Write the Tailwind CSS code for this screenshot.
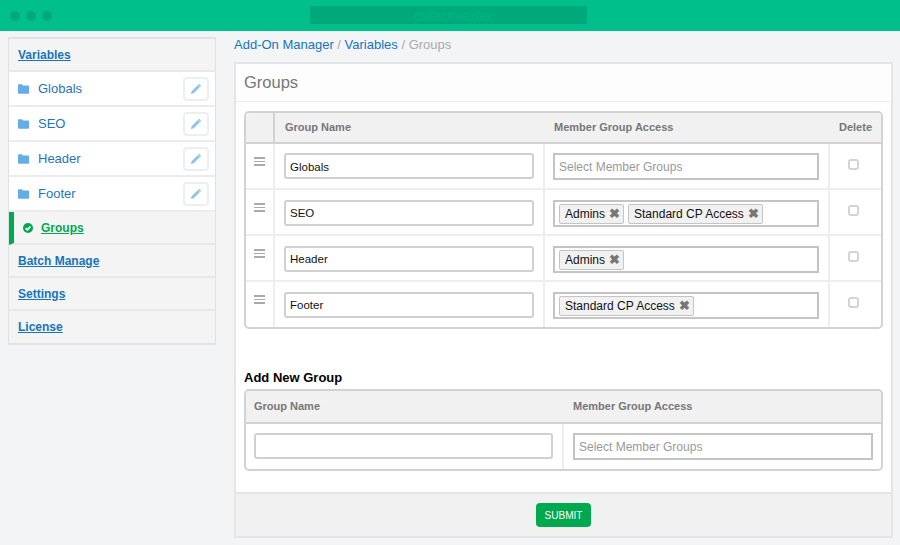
<!DOCTYPE html>
<html lang="en">
<head>
  <meta charset="UTF-8">
  <title>Groups</title>
  <script src="https://cdn.jsdelivr.net/npm/@tailwindcss/browser@4"></script>
</head>
<body class="w-[900px] h-[545px] overflow-hidden bg-[#f3f4f6] font-['Liberation_Sans',Arial,sans-serif] text-[13px] text-[#111]">
  <!-- browser bar -->
  <div class="relative h-[31px] bg-[#00bf8a] flex items-center pl-[10px] gap-[6px]">
    <span class="w-[10px] h-[10px] rounded-full bg-[#00a97c]"></span>
    <span class="w-[10px] h-[10px] rounded-full bg-[#00a97c]"></span>
    <span class="w-[10px] h-[10px] rounded-full bg-[#00a97c]"></span>
    <div class="absolute left-[310px] top-[6px] w-[277px] h-[18px] pl-[9px] rounded-[2px] bg-[#00a97a] text-center text-[13px] leading-[18px] text-[#00b583] font-['Lato',sans-serif]">collective.dev</div>
  </div>

  <div class="flex items-start pl-[8px] pt-[6px] gap-[18px]">
    <!-- sidebar -->
    <aside class="w-[208px] border-x border-t-2 border-b-2 border-[#dfe1e2] text-[14px] bg-white">
      <a class="flex items-center h-[33px] pl-[9px] border-b-2 border-[#e8e8e8] bg-[#f4f4f4] font-bold text-[12px] text-[#1674bc] underline">Variables</a>

      <div class="flex items-center h-[35px] pl-[9px] pr-[6px] border-b-2 border-[#ececec] text-[13px] text-[#1f75ba]">
        <svg class="w-[11px] h-[10px] mr-[9px]" viewBox="0 0 11 10"><path fill="#64ade6" d="M0 1.2C0 .6.4.2 1 .2h3l1 1.3h5c.6 0 1 .4 1 1v6.3c0 .6-.4 1-1 1H1c-.6 0-1-.4-1-1z"/></svg>
        <span>Globals</span>
        <span class="ml-auto w-[26px] h-[24px] flex items-center justify-center rounded-[4px] border-2 border-[#eceff1] bg-white">
          <svg class="w-[10px] h-[10px]" viewBox="0 0 11 11"><path fill="#8fc1ea" d="M0 11l.7-3L7.6 1.1l2.3 2.3L3 10.3zM8.3.4c.4-.4 1-.4 1.4 0l.9.9c.4.4.4 1 0 1.4l-.3.3L8 .7z"/></svg>
        </span>
      </div>
      <div class="flex items-center h-[35px] pl-[9px] pr-[6px] border-b-2 border-[#ececec] text-[13px] text-[#1f75ba]">
        <svg class="w-[11px] h-[10px] mr-[9px]" viewBox="0 0 11 10"><path fill="#64ade6" d="M0 1.2C0 .6.4.2 1 .2h3l1 1.3h5c.6 0 1 .4 1 1v6.3c0 .6-.4 1-1 1H1c-.6 0-1-.4-1-1z"/></svg>
        <span>SEO</span>
        <span class="ml-auto w-[26px] h-[24px] flex items-center justify-center rounded-[4px] border-2 border-[#eceff1] bg-white">
          <svg class="w-[10px] h-[10px]" viewBox="0 0 11 11"><path fill="#8fc1ea" d="M0 11l.7-3L7.6 1.1l2.3 2.3L3 10.3zM8.3.4c.4-.4 1-.4 1.4 0l.9.9c.4.4.4 1 0 1.4l-.3.3L8 .7z"/></svg>
        </span>
      </div>
      <div class="flex items-center h-[35px] pl-[9px] pr-[6px] border-b-2 border-[#ececec] text-[13px] text-[#1f75ba]">
        <svg class="w-[11px] h-[10px] mr-[9px]" viewBox="0 0 11 10"><path fill="#64ade6" d="M0 1.2C0 .6.4.2 1 .2h3l1 1.3h5c.6 0 1 .4 1 1v6.3c0 .6-.4 1-1 1H1c-.6 0-1-.4-1-1z"/></svg>
        <span>Header</span>
        <span class="ml-auto w-[26px] h-[24px] flex items-center justify-center rounded-[4px] border-2 border-[#eceff1] bg-white">
          <svg class="w-[10px] h-[10px]" viewBox="0 0 11 11"><path fill="#8fc1ea" d="M0 11l.7-3L7.6 1.1l2.3 2.3L3 10.3zM8.3.4c.4-.4 1-.4 1.4 0l.9.9c.4.4.4 1 0 1.4l-.3.3L8 .7z"/></svg>
        </span>
      </div>
      <div class="flex items-center h-[35px] pl-[9px] pr-[6px] border-b-2 border-[#ececec] text-[13px] text-[#1f75ba]">
        <svg class="w-[11px] h-[10px] mr-[9px]" viewBox="0 0 11 10"><path fill="#64ade6" d="M0 1.2C0 .6.4.2 1 .2h3l1 1.3h5c.6 0 1 .4 1 1v6.3c0 .6-.4 1-1 1H1c-.6 0-1-.4-1-1z"/></svg>
        <span>Footer</span>
        <span class="ml-auto w-[26px] h-[24px] flex items-center justify-center rounded-[4px] border-2 border-[#eceff1] bg-white">
          <svg class="w-[10px] h-[10px]" viewBox="0 0 11 11"><path fill="#8fc1ea" d="M0 11l.7-3L7.6 1.1l2.3 2.3L3 10.3zM8.3.4c.4-.4 1-.4 1.4 0l.9.9c.4.4.4 1 0 1.4l-.3.3L8 .7z"/></svg>
        </span>
      </div>

      <a class="flex items-center h-[33px] border-l-[5px] border-b-2 border-l-[#00a84f] border-b-[#e8e8e8] bg-[#f4f4f4] pl-[9px] font-bold text-[12px] text-[#00a84f]">
        <svg class="w-[10px] h-[10px] mr-[8px]" viewBox="0 0 10 10"><circle cx="5" cy="5" r="5" fill="#00a84f"/><path fill="none" stroke="#fff" stroke-width="1.6" d="M2.6 5.1l1.7 1.7 3.1-3.2"/></svg>
        <span class="underline">Groups</span>
      </a>
      <a class="flex items-center h-[33px] pl-[9px] border-b-2 border-[#e8e8e8] bg-[#f4f4f4] font-bold text-[12px] text-[#1674bc] underline">Batch Manage</a>
      <a class="flex items-center h-[33px] pl-[9px] border-b-2 border-[#e8e8e8] bg-[#f4f4f4] font-bold text-[12px] text-[#1674bc] underline">Settings</a>
      <a class="flex items-center h-[32px] pl-[9px] bg-[#f4f4f4] font-bold text-[12px] text-[#1674bc] underline">License</a>
    </aside>

    <!-- main -->
    <main class="w-[659px]">
      <div class="h-[25px] leading-[16px] text-[#aaa]"><span class="text-[#1674bc]">Add-On Manager</span> / <span class="text-[#1674bc]">Variables</span> / Groups</div>

      <section class="border-2 border-[#e3e5e6] bg-white h-[476px] flex flex-col">
        <h1 class="h-[38px] shrink-0 pl-[8px] leading-[36px] text-[16.5px] text-[#777] border-b border-[#eee] bg-[#fdfdfd]">Groups</h1>

        <div class="mt-[9px] ml-[8px] w-[639px] border-2 border-[#d2d2d2] rounded-[5px] overflow-hidden grid grid-cols-[29px_270px_285px_51px] grid-rows-[31px_46px_46px_46px_45px]">
          <div class="bg-[#f1f1f1] border-b-2 border-r-2 border-[#d2d2d2]"></div>
          <div class="bg-[#f1f1f1] border-b-2 border-[#d2d2d2] pl-[10px] text-[11px] font-bold text-[#777] leading-[29px]">Group Name</div>
          <div class="bg-[#f1f1f1] border-b-2 border-[#d2d2d2] pl-[9px] text-[11px] font-bold text-[#777] leading-[29px]">Member Group Access</div>
          <div class="bg-[#f1f1f1] border-b-2 border-[#d2d2d2] pl-[9px] text-[11px] font-bold text-[#777] leading-[29px]">Delete</div>

          <div class="border-b-2 border-r-2 border-[#eee] pl-[8px] pt-[13px]"><div class="w-[11px] h-[9px] border-y-2 border-[#aaa] flex items-center"><div class="w-full h-[1.5px] bg-[#aaa]"></div></div></div>
          <div class="border-b-2 border-r-2 border-[#eee] px-[9px] pt-[9px]"><div class="h-[26px] pl-[4px] rounded-[3px] border-2 border-[#d0d0d0] text-[11.5px] leading-[24px]">Globals</div></div>
          <div class="border-b-2 border-r-2 border-[#eee] pl-[8px] pr-[9px] pt-[9px]"><div class="h-[27px] pl-[4px] border-2 border-[#c4c4c4] text-[12px] leading-[24px] text-[#999]">Select Member Groups</div></div>
          <div class="border-b-2 border-[#eee] pt-[15px] pl-[18px]"><div class="w-[11px] h-[11px] rounded-[3px] border-2 border-[#d4d4d4]"></div></div>

          <div class="border-b-2 border-r-2 border-[#eee] pl-[8px] pt-[13px]"><div class="w-[11px] h-[9px] border-y-2 border-[#aaa] flex items-center"><div class="w-full h-[1.5px] bg-[#aaa]"></div></div></div>
          <div class="border-b-2 border-r-2 border-[#eee] px-[9px] pt-[10px]"><div class="h-[26px] pl-[4px] rounded-[3px] border-2 border-[#d0d0d0] text-[11.5px] leading-[22px]">SEO</div></div>
          <div class="border-b-2 border-r-2 border-[#eee] pl-[8px] pr-[9px] pt-[10px]"><div class="h-[27px] pl-[4px] border-2 border-[#c4c4c4] flex items-center gap-[4px] text-[12px]">
            <span class="h-[20px] flex items-center gap-[4px] pl-[5px] pr-[3px] rounded-[2px] border border-[#c4c4c4] bg-[#f1f1f1]">Admins <b class="text-[#777] text-[13px] leading-none">✖</b></span>
            <span class="h-[20px] flex items-center gap-[4px] pl-[5px] pr-[3px] rounded-[2px] border border-[#c4c4c4] bg-[#f1f1f1]">Standard CP Access <b class="text-[#777] text-[13px] leading-none">✖</b></span>
          </div></div>
          <div class="border-b-2 border-[#eee] pt-[15px] pl-[18px]"><div class="w-[11px] h-[11px] rounded-[3px] border-2 border-[#d4d4d4]"></div></div>

          <div class="border-b-2 border-r-2 border-[#eee] pl-[8px] pt-[13px]"><div class="w-[11px] h-[9px] border-y-2 border-[#aaa] flex items-center"><div class="w-full h-[1.5px] bg-[#aaa]"></div></div></div>
          <div class="border-b-2 border-r-2 border-[#eee] px-[9px] pt-[10px]"><div class="h-[26px] pl-[4px] rounded-[3px] border-2 border-[#d0d0d0] text-[11.5px] leading-[22px]">Header</div></div>
          <div class="border-b-2 border-r-2 border-[#eee] pl-[8px] pr-[9px] pt-[10px]"><div class="h-[27px] pl-[4px] border-2 border-[#c4c4c4] flex items-center gap-[4px] text-[12px]">
            <span class="h-[20px] flex items-center gap-[4px] pl-[5px] pr-[3px] rounded-[2px] border border-[#c4c4c4] bg-[#f1f1f1]">Admins <b class="text-[#777] text-[13px] leading-none">✖</b></span>
          </div></div>
          <div class="border-b-2 border-[#eee] pt-[15px] pl-[18px]"><div class="w-[11px] h-[11px] rounded-[3px] border-2 border-[#d4d4d4]"></div></div>

          <div class="border-r-2 border-[#eee] pl-[8px] pt-[13px]"><div class="w-[11px] h-[9px] border-y-2 border-[#aaa] flex items-center"><div class="w-full h-[1.5px] bg-[#aaa]"></div></div></div>
          <div class="border-r-2 border-[#eee] px-[9px] pt-[10px]"><div class="h-[26px] pl-[4px] rounded-[3px] border-2 border-[#d0d0d0] text-[11.5px] leading-[22px]">Footer</div></div>
          <div class="border-r-2 border-[#eee] pl-[8px] pr-[9px] pt-[10px]"><div class="h-[27px] pl-[4px] border-2 border-[#c4c4c4] flex items-center gap-[4px] text-[12px]">
            <span class="h-[20px] flex items-center gap-[4px] pl-[5px] pr-[3px] rounded-[2px] border border-[#c4c4c4] bg-[#f1f1f1]">Standard CP Access <b class="text-[#777] text-[13px] leading-none">✖</b></span>
          </div></div>
          <div class="pt-[15px] pl-[18px]"><div class="w-[11px] h-[11px] rounded-[3px] border-2 border-[#d4d4d4]"></div></div>
        </div>

        <h2 class="mt-[40px] ml-[8px] h-[20px] text-[13px] leading-[18px] font-bold text-black">Add New Group</h2>

        <div class="ml-[8px] w-[639px] border-2 border-[#d2d2d2] rounded-[5px] overflow-hidden grid grid-cols-[318px_317px] grid-rows-[33px_45px]">
          <div class="bg-[#f1f1f1] border-b-2 border-[#d2d2d2] pl-[8px] text-[11px] font-bold text-[#777] leading-[31px]">Group Name</div>
          <div class="bg-[#f1f1f1] border-b-2 border-[#d2d2d2] pl-[9px] text-[11px] font-bold text-[#777] leading-[31px]">Member Group Access</div>
          <div class="border-r-2 border-[#eee] pl-[8px] pr-[9px] pt-[9px]"><div class="h-[26px] rounded-[3px] border-2 border-[#d0d0d0]"></div></div>
          <div class="pl-[9px] pr-[8px] pt-[9px]"><div class="h-[27px] pl-[4px] border-2 border-[#c4c4c4] text-[12px] leading-[24px] text-[#999]">Select Member Groups</div></div>
        </div>

        <div class="mt-auto h-[44px] bg-[#f1f1f1] border-t-2 border-[#e5e5e5] flex items-center justify-center">
          <button class="w-[55px] h-[24px] rounded-[4px] bg-[#00a84f] text-white text-[10px]">SUBMIT</button>
        </div>
      </section>
    </main>
  </div>
</body>
</html>
